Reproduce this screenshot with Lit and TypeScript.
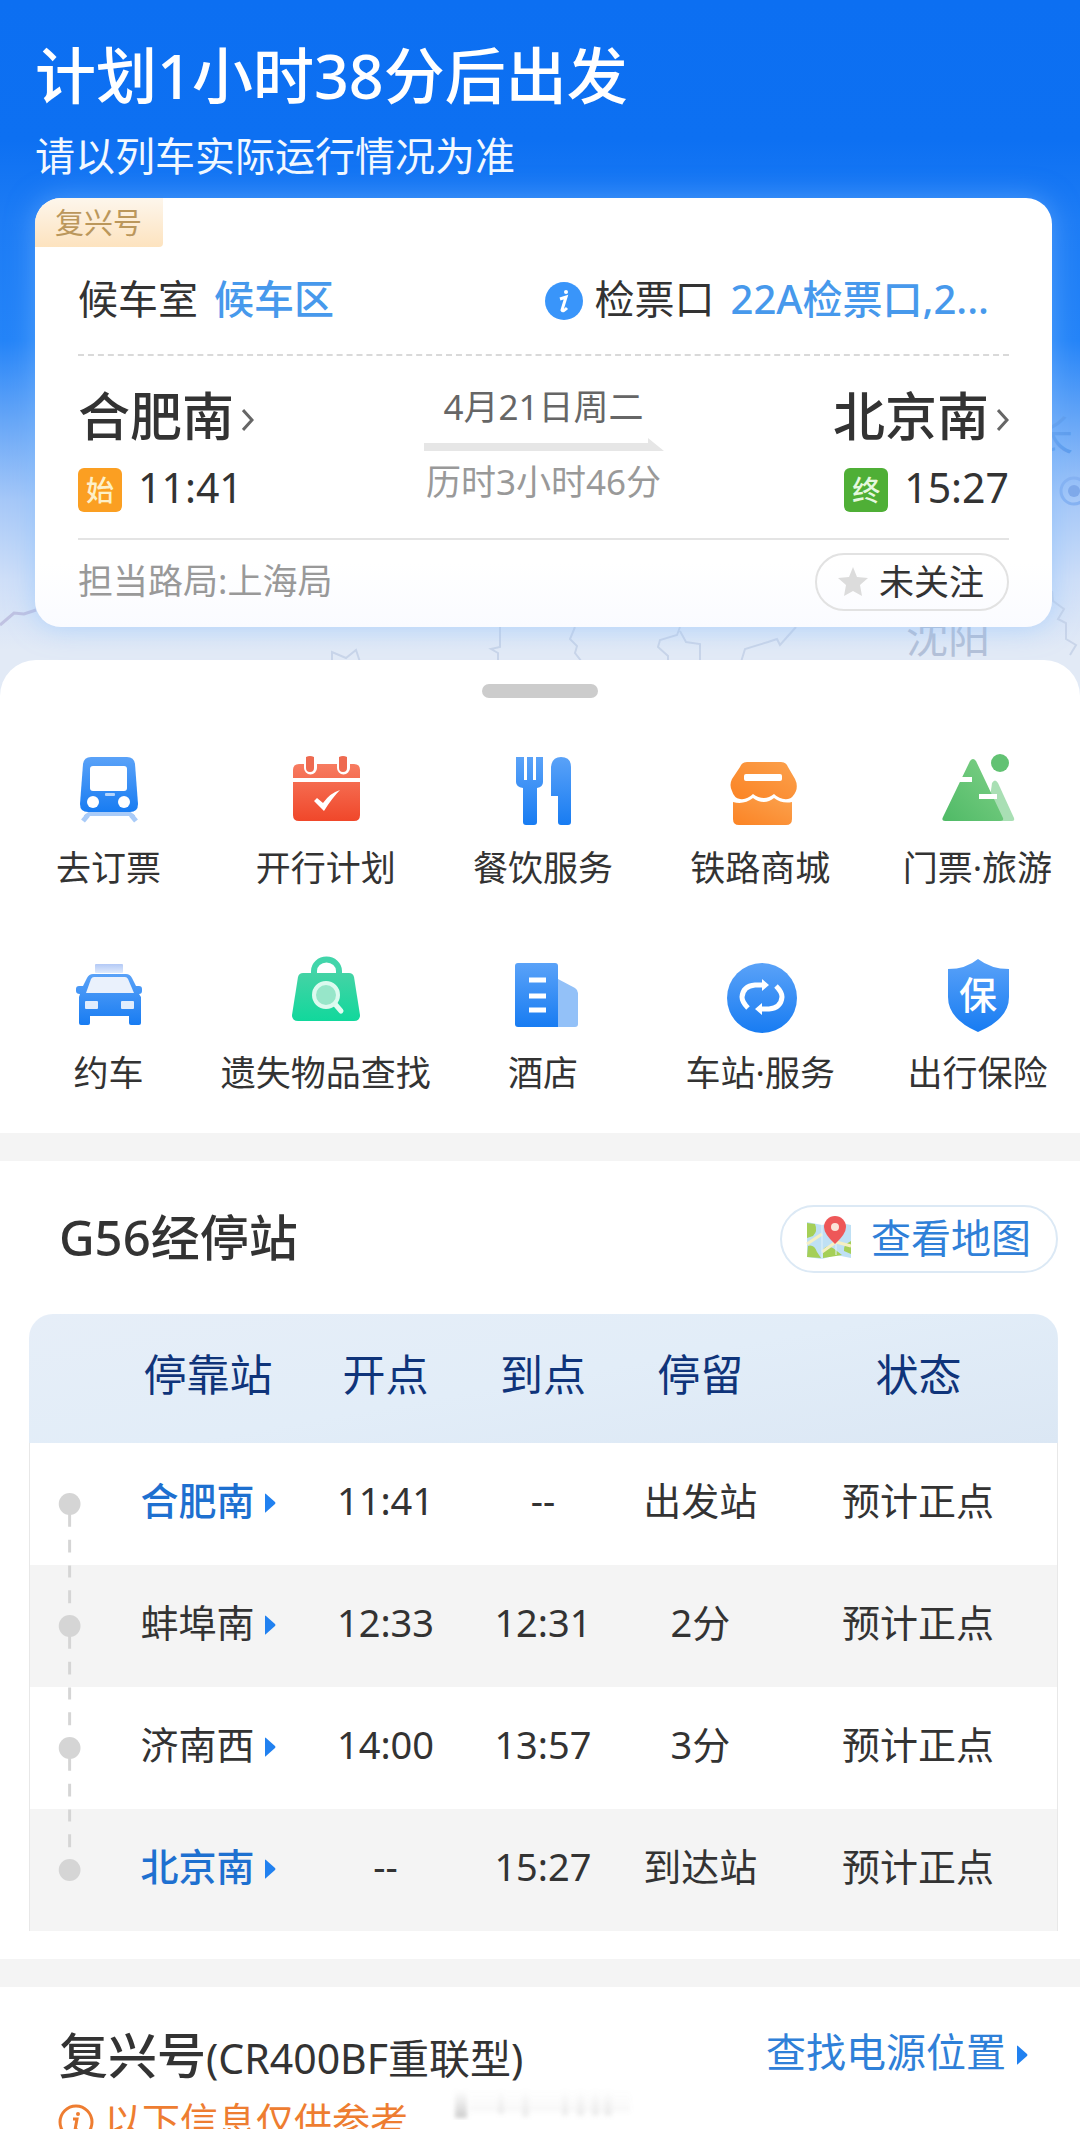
import { LitElement, html, css, svg } from "lit";
import { customElement, state } from "lit/decorators.js";

const blue = (id: string) => svg`
  <linearGradient id=${id} x1="0" y1="0" x2="0" y2="1">
    <stop offset="0" stop-color="#5aa2f8" />
    <stop offset="1" stop-color="#187cf2" />
  </linearGradient>`;

const icons = {
  train: svg`
    <defs>${blue("g")}</defs>
    <path d="M16 67 L20 64 H61 L65 67" fill="none" stroke="#a9cbf8" stroke-width="4" />
    <path d="M14 71 L19 65 M67 71 L62 65" stroke="#a9cbf8" stroke-width="5" />
    <path d="M22 7 H58 Q65 7 66 14 L69 54 Q69 62 61 62 H19 Q11 62 11 54 L14 14 Q15 7 22 7 Z" fill="url(#g)" />
    <rect x="21" y="16" width="37" height="25" rx="3" fill="#fff" />
    <rect x="36" y="43" width="10" height="3" rx="1" fill="#b5d5fc" />
    <circle cx="24" cy="52" r="6" fill="#fff" />
    <circle cx="55" cy="52" r="6" fill="#fff" />`,
  calendar: svg`
    <defs>
      <linearGradient id="g" x1="0" y1="0" x2="0" y2="1">
        <stop offset="0" stop-color="#f77c61" /><stop offset="1" stop-color="#f0472a" />
      </linearGradient>
    </defs>
    <path d="M13 14 H68 Q74 14 74 20 V65 Q74 71 68 71 H13 Q7 71 7 65 V20 Q7 14 13 14 Z" fill="url(#g)" />
    <rect x="5" y="28" width="72" height="4" fill="#fff" />
    <path d="M18 5 H31 V18 A6 6 0 0 1 18 18 Z M51 5 H64 V18 A6 6 0 0 1 51 18 Z" fill="#fff" />
    <path d="M20 7 Q24 5 28 7 V18 A4 4 0 0 1 20 18 Z M53 7 Q57 5 61 7 V18 A4 4 0 0 1 53 18 Z" fill="#ee6a50" />
    <path d="M28 51 L31 48 L37 53 Q44 43 54 40 Q46 48 38 61 Z" fill="#fff" />`,
  dining: svg`
    <defs>${blue("g")}</defs>
    <path d="M13 7 H21 V30 H24 V7 H30 V30 H33 V7 H40 V32 Q40 37 34 38 V72 Q34 75 31 75 H23 Q20 75 20 72 V38 Q13 37 13 32 Z" fill="url(#g)" />
    <path d="M48 17 Q49 7 58 7 Q68 7 68 17 V72 Q68 75 65 75 H58 Q55 75 55 72 V46 H48 Z" fill="url(#g)" />`,
  shop: svg`
    <defs>
      <linearGradient id="g" x1="1" y1="0" x2="0" y2="1">
        <stop offset="0" stop-color="#fba14d" /><stop offset="1" stop-color="#fb8324" />
      </linearGradient>
    </defs>
    <path d="M27 12 H61 Q66 12 68 17 L75 29 Q78 35 76 41 Q73 48 68 49 Q60 50 54 44 Q49 48 44 48 Q38 48 33 44 Q27 50 20 49 Q14 48 12 41 Q9 35 12 29 L20 17 Q22 12 27 12 Z" fill="url(#g)" />
    <rect x="24" y="24" width="38" height="7" rx="2" fill="#fff" />
    <path d="M13 52 Q24 55 33 48 Q38 52 44 52 Q49 52 54 48 Q62 54 72 52 V69 Q72 75 66 75 H19 Q13 75 13 69 Z" fill="url(#g)" />`,
  mountain: svg`
    <defs>
      <linearGradient id="g" x1="1" y1="0" x2="0" y2="1">
        <stop offset="0" stop-color="#7fd087" /><stop offset="1" stop-color="#4fba66" />
      </linearGradient>
    </defs>
    <path d="M55 33 Q58 28 61 33 L77 68 Q78 71 75 71 H50 Z" fill="#a9dfb4" />
    <path d="M33 11 Q36 7 39 11 L66 68 Q67 71 63 71 H8 Q4 71 6 67 Z" fill="url(#g)" />
    <circle cx="63" cy="13" r="9" fill="#62c273" />
    <rect x="18" y="27" width="17" height="5" fill="#fff" />
    <rect x="42" y="44" width="18" height="5" fill="#fff" />`,
  taxi: svg`
    <defs>${blue("g")}
      <linearGradient id="h" x1="0" y1="0" x2="0" y2="1">
        <stop offset="0" stop-color="#b3c9f6" /><stop offset="1" stop-color="#dfeafc" />
      </linearGradient>
    </defs>
    <rect x="26" y="9" width="28" height="9" rx="1" fill="url(#h)" />
    <path d="M24 19 H57 Q61 19 63 23 L67 31 H70 Q73 31 73 34 V36 Q73 39 70 39 L72 42 V68 Q72 70 70 70 H62 Q60 70 60 68 V61 H21 V68 Q21 70 19 70 H12 Q10 70 10 68 V42 L11 39 Q7 39 7 36 V34 Q7 31 10 31 H14 L18 23 Q20 19 24 19 Z" fill="url(#g)" />
    <path d="M25 22 H56 Q58 22 59 24 L65 38 H17 L22 24 Q23 22 25 22 Z" fill="#eaf1fc" />
    <rect x="16" y="46" width="13" height="8" rx="1" fill="#e1edfd" />
    <rect x="52" y="46" width="13" height="8" rx="1" fill="#e1edfd" />`,
  bag: svg`
    <defs>
      <linearGradient id="g" x1="0" y1="0" x2="0" y2="1">
        <stop offset="0" stop-color="#44d3a5" /><stop offset="1" stop-color="#11d89c" />
      </linearGradient>
    </defs>
    <path d="M28 20 V16 A12 11 0 0 1 53 16 V20" fill="none" stroke="#41d5aa" stroke-width="6" />
    <path d="M17 18 H63 Q67 18 68 22 L74 60 Q74 66 68 66 H12 Q6 66 6 60 L12 22 Q13 18 17 18 Z" fill="url(#g)" />
    <path d="M49 49 L55 56" stroke="#e4fbf2" stroke-width="5" stroke-linecap="round" />
    <circle cx="40" cy="40" r="12" fill="#97e6c9" stroke="#dcfaef" stroke-width="4" />`,
  hotel: svg`
    <defs>${blue("g")}</defs>
    <path d="M55 24 L72 33 Q75 35 75 38 V69 Q75 72 72 72 H55 Z" fill="#93c1f8" />
    <path d="M15 8 H52 Q55 8 55 11 V72 H15 Q12 72 12 69 V11 Q12 8 15 8 Z" fill="url(#g)" />
    <path d="M26 25 H43 M26 41 H43 M26 55 H43" stroke="#fff" stroke-width="5" />`,
  service: svg`
    <defs>${blue("g")}</defs>
    <circle cx="42" cy="43" r="35" fill="url(#g)" />
    <g fill="none" stroke="#fff" stroke-width="5">
      <path d="M28 53 Q22 47 22 42 Q23 31 35 30 H43" />
      <path d="M56 31 Q62 37 62 42 Q61 53 49 54 H41" />
    </g>
    <path d="M42 24 L49 30 L42 36 Z M42 48 L35 54 L42 60 Z" fill="#fff" />`,
  shield: svg`
    <defs>${blue("g")}</defs>
    <path d="M41 4 Q54 14 72 14 V42 Q72 64 41 77 Q11 64 11 42 V14 Q29 14 41 4 Z" fill="url(#g)" />
    <text x="41" y="54" text-anchor="middle" font-size="38" font-weight="500" fill="#fff">保</text>`,
};

type IconName = keyof typeof icons;

@customElement("service-tile")
class ServiceTile extends LitElement {
  static properties = { icon: {}, label: {} };
  declare icon: IconName;
  declare label: string;

  static styles = css`
    :host { display: block; }
    .tile {
      display: flex;
      flex-direction: column;
      align-items: center;
      gap: 13px;
      color: #333;
      text-decoration: none;
      font-size: 35px;
      line-height: 50px;
      white-space: nowrap;
    }
    .icon { display: block; width: 80px; height: 80px; }
  `;

  render() {
    return html`<a class="tile" href="#">
      <svg class="icon" viewBox="0 0 80 80" aria-hidden="true">${icons[this.icon]}</svg>
      <span>${this.label}</span>
    </a>`;
  }
}

interface Stop {
  name: string;
  depart: string;
  arrive: string;
  stay: string;
  terminal: boolean;
}

const tiles: [IconName, string][] = [
  ["train", "去订票"],
  ["calendar", "开行计划"],
  ["dining", "餐饮服务"],
  ["shop", "铁路商城"],
  ["mountain", "门票·旅游"],
  ["taxi", "约车"],
  ["bag", "遗失物品查找"],
  ["hotel", "酒店"],
  ["service", "车站·服务"],
  ["shield", "出行保险"],
];

const stops: Stop[] = [
  { name: "合肥南", depart: "11:41", arrive: "--", stay: "出发站", terminal: true },
  { name: "蚌埠南", depart: "12:33", arrive: "12:31", stay: "2分", terminal: false },
  { name: "济南西", depart: "14:00", arrive: "13:57", stay: "3分", terminal: false },
  { name: "北京南", depart: "--", arrive: "15:27", stay: "到达站", terminal: true },
];

@customElement("app-root")
class AppRoot extends LitElement {
  @state() private followed = false;

  static styles = css`
    :host {
      display: block;
      height: 100vh;
      overflow: hidden auto;
      scrollbar-width: none;
      background: #fff;
      color: #333;
      font-family: "Noto Sans", "Noto Sans CJK SC", sans-serif;
    }
    h1, h2, p { margin: 0; font-weight: 400; }
    a { color: inherit; text-decoration: none; }
    button { font: inherit; color: inherit; cursor: pointer; }

    .hero {
      position: relative;
      padding: 36px 28px 74px 35px;
      background: linear-gradient(180deg, #0c6ff2 0, #0d70f2 140px, #1d7cf5 220px, #2484f8 340px, #66a6f7 420px, #a6c8f8 500px, #cfdff8 580px, #e2eaf6 650px);
    }
    .map { position: absolute; right: 0; bottom: 0; width: 1080px; height: 400px; }
    .title { position: relative; color: #fff; font-size: 61px; font-weight: 500; line-height: 80px; }
    .subtitle { position: relative; margin-top: 12px; color: #f2f8ff; font-size: 40px; line-height: 56px; }

    .glow { position: relative; margin-top: 14px; border-radius: 26px; box-shadow: 0 0 28px rgba(130, 190, 255, 0.5); }
    .card {
      padding: 0 43px 16px;
      border-radius: 26px;
      overflow: hidden;
      background: linear-gradient(180deg, #fff 85%, #fafbff);
    }
    .series {
      display: block;
      width: 128px;
      margin-left: -43px;
      box-sizing: border-box;
      padding: 2px 0 1px 20px;
      border-radius: 0 0 4px 0;
      background: linear-gradient(180deg, #fdf6ec, #fde3bf);
      color: #bb975b;
      font-size: 29px;
      line-height: 46px;
    }
    .gate {
      display: flex;
      align-items: center;
      margin-top: 24px;
      padding: 0 20px 27px 0;
      border-bottom: 2px dashed #d9d9d9;
      font-size: 40px;
      line-height: 56px;
      white-space: nowrap;
    }
    .gate a { margin-left: 16px; color: #4799ec; font-weight: 500; }
    .gate .info { width: 38px; height: 38px; margin: 4px 12px 0 auto; }

    .journey { display: flex; justify-content: space-between; margin-top: 28px; }
    .end { flex: 1; display: flex; flex-direction: column; gap: 20px; }
    .end.to { align-items: flex-end; }
    .station { display: flex; align-items: center; gap: 8px; font-size: 52px; font-weight: 500; line-height: 64px; }
    .station svg { width: 12px; height: 22px; margin-top: 8px; }
    .clock { display: flex; align-items: center; gap: 16px; font-size: 41px; line-height: 44px; }
    .clock .text { margin-top: -6px; }
    .tag {
      width: 44px;
      border-radius: 6px;
      color: #fdf0c8;
      font-size: 28px;
      font-weight: 500;
      line-height: 44px;
      text-align: center;
    }
    .tag.first { background: #fb9f22; }
    .tag.last { background: #4faf36; color: #e6f8df; }
    .middle { display: flex; flex-direction: column; align-items: center; font-size: 35px; line-height: 46px; color: #666; }
    .middle svg { width: 240px; height: 13px; margin: 8px 0; }
    .middle .span { color: #999; }

    .foot {
      display: flex;
      justify-content: space-between;
      margin-top: 26px;
      padding-top: 13px;
      border-top: 2px solid #e4e4e4;
      color: #999;
      font-size: 35px;
      line-height: 56px;
    }
    .follow {
      display: flex;
      align-items: center;
      gap: 10px;
      height: 58px;
      padding: 0 23px 0 20px;
      border: 2px solid #e2e2e2;
      border-radius: 29px;
      background: transparent;
      color: #333;
    }
    .follow svg { width: 32px; height: 32px; }

    .sheet {
      position: relative;
      margin-top: -41px;
      padding: 24px 0 35px;
      border-radius: 36px 36px 0 0;
      background: #fff;
    }
    .grip { width: 116px; height: 14px; margin: 0 auto; border-radius: 7px; background: #ccc; }
    .tiles {
      display: grid;
      grid-template-columns: repeat(5, 1fr);
      row-gap: 62px;
      margin: 52px -6px 0 0;
    }
    .band { height: 28px; background: #f4f4f4; }

    .stops { padding: 44px 22px 28px 29px; }
    .stops-head { display: flex; justify-content: space-between; align-items: flex-start; padding-left: 30px; }
    .heading { font-size: 49px; font-weight: 500; line-height: 64px; }
    .map-button {
      display: flex;
      align-items: center;
      gap: 19px;
      height: 68px;
      padding: 0 25px 2px 24px;
      border: 2px solid #dce9f5;
      border-radius: 34px;
      background: #fff;
      color: #2f80d8;
      font-size: 40px;
      line-height: 60px;
    }
    .map-button svg { width: 46px; height: 44px; }

    .clip { margin-top: 41px; border-radius: 24px 24px 0 0; overflow: hidden; }
    .table {
      width: 100%;
      border-spacing: 0;
      table-layout: fixed;
      text-align: center;
      font-size: 38px;
      line-height: 50px;
      white-space: nowrap;
    }
    .c1 { width: 7.8%; }
    .c2 { width: 19.2%; }
    .c3 { width: 15.3%; }
    .table th { height: 122px; padding: 0 0 7px; font-weight: 400; font-size: 43px; color: #0f347a; }
    .table thead { background: linear-gradient(170deg, #e6eef8, #e2edf8 50%, #dbe7f4); }
    .table td { height: 114px; padding: 0 0 8px; }
    .table td.rail { height: 122px; padding: 0; border-left: 1px solid #e8e8e8; }
    .table td:last-child { border-right: 1px solid #e8e8e8; }
    .table tbody tr:nth-child(even) { background: #f4f4f4; }
    .rail svg { display: block; width: 100%; height: 122px; }
    .stop { display: flex; justify-content: center; align-items: center; gap: 9px; }
    .stop.terminal { color: #1e70d0; font-weight: 500; }
    .arrow { width: 12px; height: 20px; margin-top: 5px; }

    .train { position: relative; padding: 35px 52px 0 59px; }
    .train-head { display: flex; justify-content: space-between; align-items: flex-start; }
    .train-name { line-height: 66px; }
    .model { font-size: 41px; font-weight: 400; }
    .power { display: flex; align-items: center; gap: 10px; color: #2f80d8; font-size: 40px; line-height: 60px; }
    .note { display: flex; align-items: center; gap: 10px; margin-top: 4px; color: #ee7d31; font-size: 38px; line-height: 50px; }
    .note svg { width: 36px; height: 36px; margin: 4px 0 0 -1px; }
    .shade { position: absolute; left: 450px; top: 101px; width: 190px; height: 32px; }
  `;

  private chevron() {
    return html`<svg viewBox="0 0 12 22" aria-hidden="true">
      <path d="M1 1 L10 11 L1 21" fill="none" stroke="#666" stroke-width="3" />
    </svg>`;
  }

  private arrow() {
    return html`<svg class="arrow" viewBox="0 0 12 20" aria-hidden="true">
      <path d="M1 1 Q1 0 2 1 L11 9 Q12 10 11 11 L2 19 Q1 20 1 19 Z" fill="#2181f0" />
    </svg>`;
  }

  private rail(i: number) {
    return html`<svg viewBox="0 0 80 122" aria-hidden="true">
      <g stroke="#d5d5d5" stroke-width="3">
        ${i > 0 ? svg`<path d="M40 0 V12 M40 25 V38" />` : ""}
        ${i < stops.length - 1 ? svg`<path d="M40 60 V84 M40 97 V110" />` : ""}
      </g>
      <circle cx="40" cy="61" r="11" fill="#d5d5d5" />
    </svg>`;
  }

  private backdrop() {
    return html`<svg class="map" viewBox="0 0 1080 400" aria-hidden="true">
      <g fill="none" stroke="#c3d0e6" stroke-width="2" opacity="0.8">
        <path d="M0 324 L14 312 L24 313 L36 309" stroke="#b9b9dc" stroke-width="3" />
        <path d="M332 361 V351 L346 357 L356 349 L360 361" />
        <path d="M500 326 V346 L491 348 L498 352 V361" />
        <path d="M575 326 L570 338 L577 345 L575 352 L582 361" />
        <path d="M680 326 L677 334 L660 339 L658 346 L668 355 V361 M680 330 L686 341 L700 343 V361" />
        <path d="M796 326 L780 344 L777 338 L768 341 L745 348 L741 361" />
        <path d="M1052 290 L1053 300 L1064 308 L1058 318 L1066 322 V338 L1076 344 L1070 354" />
      </g>
      <g font-size="42">
        <text x="906" y="352" fill="#b4c1d8">沈阳</text>
        <text x="1031" y="150" fill="#5e9cec">长</text>
      </g>
      <circle cx="1074" cy="190" r="13" fill="none" stroke="#86b2f2" stroke-width="3" />
      <circle cx="1074" cy="190" r="6" fill="#7fa9ea" />
    </svg>`;
  }

  render() {
    return html`
      <header class="hero">
        ${this.backdrop()}
        <h1 class="title">计划1小时38分后出发</h1>
        <p class="subtitle">请以列车实际运行情况为准</p>
        <div class="glow">
          <section class="card">
            <span class="series">复兴号</span>
            <div class="gate">
              <span>候车室</span><a href="#">候车区</a>
              <svg class="info" viewBox="0 0 38 38" aria-hidden="true">
                <circle cx="19" cy="19" r="19" fill="#3995fa" />
                <circle cx="21" cy="10" r="2" fill="#fff" />
                <path d="M15 17 Q18 16 21 15 L17 28 Q18 30 22 26" fill="none" stroke="#fff" stroke-width="3" />
              </svg>
              <span>检票口</span><a href="#">22A检票口,2...</a>
            </div>
            <div class="journey">
              <div class="end">
                <a class="station" href="#">合肥南${this.chevron()}</a>
                <div class="clock"><span class="tag first">始</span><span class="text">11:41</span></div>
              </div>
              <div class="middle">
                <span>4月21日周二</span>
                <svg viewBox="0 0 240 13" aria-hidden="true"><path d="M0 5 H224 V0 L240 13 H0 Z" fill="#e6e6e6" /></svg>
                <span class="span">历时3小时46分</span>
              </div>
              <div class="end to">
                <a class="station" href="#">北京南${this.chevron()}</a>
                <div class="clock"><span class="tag last">终</span><span class="text">15:27</span></div>
              </div>
            </div>
            <div class="foot">
              <span>担当路局:上海局</span>
              <button class="follow" type="button" @click=${() => (this.followed = !this.followed)}>
                <svg viewBox="0 0 32 32" aria-hidden="true">
                  <path d="M16 1 L20 11 L31 12 L23 19 L25 30 L16 25 L7 30 L9 19 L1 12 L12 11 Z" fill=${this.followed ? "#fb9f22" : "#dcdcdc"} />
                </svg>
                ${this.followed ? "已关注" : "未关注"}
              </button>
            </div>
          </section>
        </div>
      </header>

      <nav class="sheet">
        <div class="grip"></div>
        <div class="tiles">
          ${tiles.map(([icon, label]) => html`<service-tile .icon=${icon} .label=${label}></service-tile>`)}
        </div>
      </nav>
      <div class="band"></div>

      <section class="stops">
        <div class="stops-head">
          <h2 class="heading">G56经停站</h2>
          <button class="map-button" type="button">
            <svg viewBox="0 0 46 44" aria-hidden="true">
              <path d="M1 6 L16 9 L30 6 L45 9 V42 L30 39 L16 43 L1 41 Z" fill="#bfe0f4" />
              <path d="M1 7 L9 8 Q12 15 7 20 L1 22 Z M2 30 Q8 28 11 36 L15 42 L1 41 Z M45 25 Q37 29 38 35 L45 38 Z M17 34 Q20 28 27 32 L36 39 L30 40 L17 42 Z" fill="#a5cf57" />
              <path d="M1 28 L16 18 M16 36 L30 26 L45 30" stroke="#f5efc3" stroke-width="3" fill="none" />
              <path d="M16 9 V43 M30 6 V39" stroke="#e2f2fa" stroke-width="1" />
              <path d="M29 28 Q18 18 18 11 A11 11 0 0 1 40 11 Q40 18 29 28 Z" fill="#ee5758" />
              <circle cx="29" cy="11" r="4" fill="#fbe3d8" />
            </svg>
            查看地图
          </button>
        </div>
        <div class="clip">
          <table class="table">
            <colgroup><col class="c1" /><col class="c2" /><col class="c3" /><col class="c3" /><col class="c3" /><col /></colgroup>
            <thead>
              <tr><th></th><th>停靠站</th><th>开点</th><th>到点</th><th>停留</th><th>状态</th></tr>
            </thead>
            <tbody>
              ${stops.map((s, i) => html`<tr>
                <td class="rail">${this.rail(i)}</td>
                <td><a class="stop ${s.terminal ? "terminal" : ""}" href="#">${s.name}${this.arrow()}</a></td>
                <td>${s.depart}</td>
                <td>${s.arrive}</td>
                <td>${s.stay}</td>
                <td>预计正点</td>
              </tr>`)}
            </tbody>
          </table>
        </div>
      </section>
      <div class="band"></div>

      <section class="train">
        <div class="train-head">
          <h2 class="heading train-name">复兴号<span class="model">(CR400BF重联型)</span></h2>
          <a class="power" href="#">查找电源位置${this.arrow()}</a>
        </div>
        <p class="note">
          <svg viewBox="0 0 36 36" aria-hidden="true">
            <circle cx="18" cy="18" r="16" fill="none" stroke="#ee7d31" stroke-width="3" />
            <circle cx="20" cy="10" r="2" fill="#ee7d31" />
            <path d="M15 15 H19 L17 26 H20" fill="none" stroke="#ee7d31" stroke-width="3" />
          </svg>
          以下信息仅供参考
        </p>
        <svg class="shade" viewBox="0 0 190 32" aria-hidden="true">
          <defs>
            <linearGradient id="v" x1="0" y1="0" x2="0" y2="1">
              <stop offset="0" stop-color="#aaa" stop-opacity="0" /><stop offset="1" stop-color="#999" stop-opacity="0.5" />
            </linearGradient>
            <filter id="b"><feGaussianBlur stdDeviation="2" /></filter>
          </defs>
          <g fill="url(#v)" filter="url(#b)">
            <rect x="5" y="2" width="12" height="28" />
            <g opacity="0.35">
              <rect x="20" y="2" width="160" height="22" opacity="0.4" />
              <rect x="48" y="2" width="6" height="24" /><rect x="72" y="2" width="7" height="27" />
              <rect x="112" y="2" width="6" height="26" /><rect x="127" y="2" width="7" height="26" />
              <rect x="142" y="2" width="7" height="26" /><rect x="154" y="2" width="8" height="26" />
            </g>
          </g>
        </svg>
      </section>
    `;
  }
}
